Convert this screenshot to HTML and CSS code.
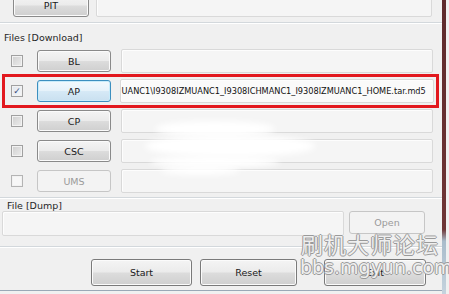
FILE: index.html
```html
<!DOCTYPE html>
<html lang="en">
<head>
    <meta charset="UTF-8">
    <title>Odin</title>
    <link rel="stylesheet" href="styles.css">
</head>
<body>
    <div class="window">
        <div class="panel">
            <div class="row top-row">
                <span class="btn pit">PIT</span>
                <span class="field pit-field"></span>
            </div>

            <div class="group download">
                <div class="group-label">Files [Download]</div>
                <div class="row file-row">
                    <span class="check"></span>
                    <span class="btn">BL</span>
                    <span class="field"></span>
                </div>
                <div class="row file-row marked">
                    <span class="check checked">&#10003;</span>
                    <span class="btn focused">AP</span>
                    <span class="field filled">UANC1\I9308IZMUANC1_I9308ICHMANC1_I9308IZMUANC1_HOME.tar.md5</span>
                </div>
                <div class="row file-row">
                    <span class="check"></span>
                    <span class="btn">CP</span>
                    <span class="field"></span>
                </div>
                <div class="row file-row">
                    <span class="check"></span>
                    <span class="btn">CSC</span>
                    <span class="field"></span>
                </div>
                <div class="row file-row">
                    <span class="check empty"></span>
                    <span class="btn disabled">UMS</span>
                    <span class="field"></span>
                </div>
            </div>

            <div class="group dump">
                <div class="group-label">File [Dump]</div>
                <div class="row dump-row">
                    <span class="field dump-field"></span>
                    <span class="btn disabled open">Open</span>
                </div>
            </div>

            <div class="actions">
                <span class="btn big start">Start</span>
                <span class="btn big reset">Reset</span>
                <span class="btn big exit">Exit</span>
            </div>
        </div>
        <div class="frame"></div>

        <!-- zamazani dio slike -->
        <div class="smudge s1"></div>
        <div class="smudge s2"></div>
        <div class="smudge s3"></div>
        <div class="smudge s4"></div>

        <div class="watermark">
            <div class="wm-cn">刷机大师论坛</div>
            <div class="wm-url">bbs.mgyun.com</div>
        </div>
    </div>
</body>
</html>
```

FILE: styles.css
```css
body {
    margin: 0;
    background: #f0f0f0;
    font-family: "DejaVu Sans", "Noto Sans CJK SC", sans-serif;
    font-size: 9px;
    color: #1e1e1e;
}

.window {
    position: relative;
    width: 449px;
    height: 294px;
    overflow: hidden;
    display: flex;
    background: #f0f0f0;
}

.panel {
    width: 442px;
    height: 294px;
}

/* desni rub prozora */
.frame {
    width: 4px;
    margin-right: 3px;
    background: linear-gradient(#5e2a2c 0, #6e3536 78%, #a9bccb 82%, #c5d3de 100%);
}

.row {
    display: flex;
    align-items: center;
}

/* Gumbi */
.btn {
    display: flex;
    align-items: center;
    justify-content: center;
    box-sizing: border-box;
    width: 74px;
    height: 22px;
    border: 1px solid #8a8a8a;
    border-radius: 3px;
    background: linear-gradient(#f4f4f4 0, #ebebeb 48%, #dcdcdc 52%, #cfcfcf 100%);
    box-shadow: inset 0 0 0 1px #fbfbfb;
    font-family: "DejaVu Sans", sans-serif;
    font-size: 9.5px;
    color: #1a1a1a;
}

.btn.focused {
    border-color: #3c8fbf;
    background: linear-gradient(#f2f9fd 0, #e6f2fa 48%, #d6e9f6 52%, #c9e0f0 100%);
    box-shadow: inset 0 0 0 1px #c8ecfb;
}

.btn.disabled {
    border-color: #c6c6c6;
    background: #f3f3f3;
    box-shadow: none;
    color: #9a9a9a;
}

/* Polja */
.field {
    box-sizing: border-box;
    height: 24px;
    border: 1px solid #d9d9d9;
    border-radius: 2px;
    background: #f5f5f5;
    box-shadow: inset 1px 1px 0 #fdfdfd;
}

.top-row {
    height: 23px;
    margin-top: -6px;
}

.pit {
    margin-left: 13px;
    width: 76px;
    height: 23px;
}

.pit-field {
    margin-left: 7px;
    width: 336px;
    height: 23px;
}

.group {
    border-top: 1px solid #d3d8dc;
    box-shadow: inset 0 1px 0 #fff;
}

.download {
    margin-top: 5px;
}

.group-label {
    height: 13px;
    padding: 8px 0 0 4px;
    line-height: 13px;
    font-size: 9.5px;
    color: #262626;
}

.file-row {
    height: 24px;
    margin-top: 6px;
}

.group-label + .file-row {
    margin-top: 5px;
}

.file-row .field {
    margin-left: 10px;
    width: 312px;
}

.file-row .btn {
    margin-left: 14px;
}

.marked {
    outline: 3px solid #e2181e;
    outline-offset: 2px;
    margin-left: 7px;
    margin-right: 8px;
}

.marked .check {
    margin-left: 4px;
}

.marked .field {
    margin-left: 9px;
    width: 316px;
}

.filled {
    display: flex;
    align-items: center;
    padding-left: 1px;
    background: #fafafa;
    font-family: "DejaVu Sans", sans-serif;
    font-size: 8.2px;
    color: #111;
    white-space: nowrap;
}

/* Checkbox */
.check {
    box-sizing: border-box;
    width: 12px;
    height: 12px;
    margin-left: 11px;
    border: 1px solid #a0a0a0;
    background: linear-gradient(135deg, #cfcfcf, #ececec);
    box-shadow: inset 0 0 0 1px #f2f2f2;
    font-size: 9px;
    line-height: 10px;
    text-align: center;
    color: #3b4c79;
}

.check.checked {
    background: linear-gradient(135deg, #dfe6ee, #f7f7f7);
}

.check.empty {
    background: #f7f7f7;
    border-color: #b4b4b4;
}

.dump {
    margin-top: 4px;
    height: 48px;
}

.dump .group-label {
    padding: 1px 0 0 7px;
    height: 12px;
    line-height: 14px;
}

.dump-row {
    align-items: flex-start;
}

.dump-field {
    margin-left: 2px;
    width: 342px;
    height: 25px;
}

.open {
    margin-left: 5px;
    width: 76px;
    height: 23px;
}

.actions {
    display: flex;
    padding-top: 12px;
    border-top: 1px solid #d3d8dc;
    box-shadow: inset 0 1px 0 #fff;
    height: 31px;
    border-bottom: 1px solid #9aa8b6;
}

.btn.big {
    height: 27px;
    border-color: #7a7a7a;
}

.start {
    margin-left: 91px;
    width: 101px;
}

.reset {
    margin-left: 8px;
    width: 97px;
}

.exit {
    margin-left: 27px;
    width: 102px;
}

/* bijele mrlje preko teksta */
.smudge {
    position: absolute;
    background: #fff;
    border-radius: 50%;
    filter: blur(3px);
}

.s1 {
    left: 155px;
    top: 121px;
    width: 120px;
    height: 16px;
}

.s2 {
    left: 145px;
    top: 135px;
    width: 170px;
    height: 22px;
}

.s3 {
    left: 150px;
    top: 156px;
    width: 130px;
    height: 12px;
}

.s4 {
    left: 160px;
    top: 166px;
    width: 80px;
    height: 9px;
}

/* vodeni žig */
.watermark {
    position: absolute;
    left: 300px;
    top: 232px;
    width: 140px;
    text-align: center;
    color: rgba(255, 255, 255, 0.85);
    text-shadow: 1px 0 0 #9a9a9a, -1px 0 0 #9a9a9a, 0 1px 0 #9a9a9a, 0 -1px 0 #9a9a9a;
    line-height: 1;
}

.wm-cn {
    font-family: "Noto Sans CJK SC", sans-serif;
    font-size: 22px;
    letter-spacing: 1px;
}

.wm-url {
    margin-top: 4px;
    font-family: "DejaVu Sans", sans-serif;
    font-size: 19px;
}
```
